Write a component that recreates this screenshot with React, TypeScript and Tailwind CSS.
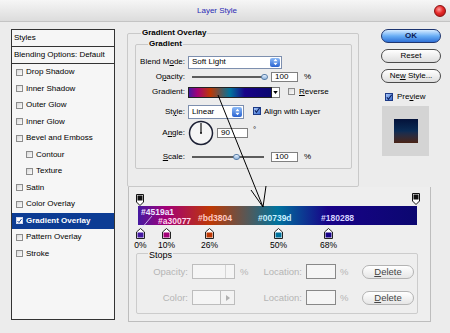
import React from "react";

function Cb() {
  return (
    <span className="inline-block h-[7px] w-[7px] shrink-0 border border-[#8c8c8c] bg-gradient-to-br from-[#d9d9d9] to-[#fbfbfb]" />
  );
}

function CbChecked() {
  return (
    <span className="relative inline-flex h-[8px] w-[8px] shrink-0 items-center justify-center border border-[#1d3a86] bg-gradient-to-br from-[#a9c6f5] to-[#3a6cd0]">
      <svg viewBox="0 0 10 10" className="h-[9px] w-[9px]">
        <path d="M1.5 4.5 L4 8 L9.5 0.5" fill="none" stroke="#0b1f5c" strokeWidth="1.8" />
      </svg>
    </span>
  );
}

function CbSel() {
  return (
    <span className="inline-flex h-[7px] w-[7px] shrink-0 items-center justify-center border border-[#d0d8f0] bg-white">
      <svg viewBox="0 0 10 10" className="h-[6px] w-[6px]">
        <path d="M1 5 L4 8 L9 1" fill="none" stroke="#0c3c94" strokeWidth="2" />
      </svg>
    </span>
  );
}

function SelArrow() {
  return (
    <span className="flex h-full w-[10px] items-center justify-center rounded-[2px] bg-gradient-to-b from-[#8cbaf7] to-[#2a62d0]">
      <svg viewBox="0 0 6 9" className="h-[8px] w-[5px]">
        <path d="M3 0.5 L5.5 3.5 H0.5Z M3 8.5 L5.5 5.5 H0.5Z" fill="white" />
      </svg>
    </span>
  );
}

function Thumb({ left }: { left: string }) {
  return (
    <span className={`absolute top-[1px] ${left} h-[6px] w-[7px] rounded-full border border-[#5a7fa8] bg-gradient-to-b from-[#e6f1ff] to-[#8fb3da]`} />
  );
}

function OpStop() {
  return (
    <svg viewBox="0 0 8 12" className="h-[12px] w-[8px]">
      <path d="M0.5 0.5 H7.5 V8 L4 11.5 L0.5 8 Z" fill="white" stroke="#111" />
      <rect x="1.5" y="1.5" width="5" height="5" fill="#111" />
    </svg>
  );
}

function ColorStop({ color }: { color: string }) {
  return (
    <svg viewBox="0 0 9 11" className="h-[11px] w-[9px]">
      <path d="M4.5 0.5 L8.5 4 V10.5 H0.5 V4 Z" fill="white" stroke="#222" />
      <rect x="1.5" y="4.5" width="6" height="5" fill={color} />
    </svg>
  );
}

const items: { t: React.ReactNode; i?: boolean; sel?: boolean }[] = [
  { t: "Drop Shadow" },
  { t: "Inner Shadow" },
  { t: "Outer Glow" },
  { t: "Inner Glow" },
  { t: "Bevel and Emboss" },
  { t: "Contour", i: true },
  { t: "Texture", i: true },
  { t: "Satin" },
  { t: "Color Overlay" },
  { t: "Gradient Overlay", sel: true },
  { t: "Pattern Overlay" },
  { t: "Stroke" },
];

const GRAD =
  "bg-[linear-gradient(to_right,#4519a1_0%,#a30077_10%,#bd3804_26%,#00739d_50%,#180288_68%,#0b0770_100%)]";

export default function App() {
  return (
    <div className="relative h-[333px] w-[450px] overflow-hidden bg-[#ececec] font-['Liberation_Sans',Arial,sans-serif] text-[8px] leading-none text-black">
      {/* title bar */}
      <div className="flex h-[22px] items-center border-b border-[#c4c4c4] bg-gradient-to-b from-[#f6f6f6] to-[#dcdcdc]">
        <div className="flex flex-1 justify-center text-[#2a2ab4]">Layer Style</div>
        <span className="mr-[4px] h-[12px] w-[12px] rounded-full border border-[#8a1010] bg-[radial-gradient(circle_at_40%_35%,#ff9c9c_0%,#e62a2a_45%,#a80c0c_100%)]" />
      </div>

      <div className="flex h-[311px]">
        {/* left list */}
        <div className="w-[127px] shrink-0 pl-[11px] pt-[7px]">
          <div className="h-[291px] w-[104px] border border-[#333] bg-[#f6f6f6]">
            <div className="flex h-[17px] items-center border-b border-[#333] pl-[2px]">Styles</div>
            <div className="flex h-[17px] items-center border-b border-[#333] pl-[2px]">Blending Options: Default</div>
            {items.map((it, k) => (
              <div
                key={k}
                className={`flex h-[16.5px] items-center ${it.i ? "pl-[14px]" : "pl-[4px]"} ${
                  it.sel ? "bg-[#0c3c94] font-bold text-white" : ""
                }`}
              >
                {it.sel ? <CbSel /> : <Cb />}
                <span className="ml-[3px]">{it.t}</span>
              </div>
            ))}
          </div>
        </div>

        {/* right area */}
        <div className="flex flex-1 flex-col">
          <div className="flex h-[165px]">
            {/* outer group */}
            <div className="relative mt-[11px] h-[154px] w-[232px] rounded-[2px] border border-[#c9c9c9]">
              <span className="absolute -top-[5px] left-[13px] bg-[#ececec] px-[1px] font-bold">Gradient Overlay</span>
              <div className="relative ml-[7px] mt-[10px] h-[125px] w-[217px] rounded-[2px] border border-[#c9c9c9] pt-[10px]">
                <span className="absolute -top-[5px] left-[12px] bg-[#ececec] px-[1px] font-bold">Gradient</span>

                {/* blend mode */}
                <div className="flex h-[14px] items-center">
                  <span className="w-[49px] text-right">
                    Blend M<u>o</u>de:
                  </span>
                  <div className="ml-[3px] flex h-[13px] w-[94px] items-center border border-[#7d8fae] bg-white py-[1px] pl-[3px] pr-[1px]">
                    <span className="flex-1">Soft Light</span>
                    <SelArrow />
                  </div>
                </div>

                {/* opacity */}
                <div className="mt-[1px] flex h-[14px] items-center">
                  <span className="w-[49px] text-right">
                    O<u>p</u>acity:
                  </span>
                  <div className="relative ml-[7px] h-[8px] w-[75px]">
                    <div className="mt-[3px] h-[2px] w-full bg-[#5c5c5c]" />
                    <Thumb left="left-[69px]" />
                  </div>
                  <div className="ml-[4px] flex h-[10px] w-[27px] items-center border border-[#808080] bg-white pl-[3px]">100</div>
                  <span className="ml-[6px]">%</span>
                </div>

                {/* gradient */}
                <div className="mt-[1px] flex h-[14px] items-center">
                  <span className="w-[49px] text-right">Gradient:</span>
                  <div className={`ml-[3px] h-[11px] w-[84px] border border-[#222] ${GRAD}`} />
                  <div className="flex h-[11px] w-[8px] items-center justify-center border border-l-0 border-[#777] bg-white">
                    <svg viewBox="0 0 6 4" className="h-[3px] w-[5px]">
                      <path d="M0 0 H6 L3 4Z" fill="#000" />
                    </svg>
                  </div>
                  <span className="ml-[8px]">
                    <Cb />
                  </span>
                  <span className="ml-[4px]">
                    <u>R</u>everse
                  </span>
                </div>

                {/* style */}
                <div className="mt-[6px] flex h-[14px] items-center">
                  <span className="w-[49px] text-right">
                    St<u>y</u>le:
                  </span>
                  <div className="ml-[3px] flex h-[14px] w-[56px] items-center border border-[#7d8fae] bg-white py-[1px] pl-[3px] pr-[1px]">
                    <span className="flex-1">Linear</span>
                    <SelArrow />
                  </div>
                  <span className="ml-[9px]">
                    <CbChecked />
                  </span>
                  <span className="ml-[3px]">Align with Layer</span>
                </div>

                {/* angle */}
                <div className="mt-[1px] flex h-[26px] items-center">
                  <span className="w-[49px] text-right">
                    A<u>n</u>gle:
                  </span>
                  <svg viewBox="0 0 26 26" className="ml-[3px] h-[26px] w-[26px]">
                    <circle cx="13" cy="13" r="11.5" fill="#f5f5f5" stroke="#1b1f33" strokeWidth="1.5" />
                    <line x1="13" y1="13" x2="13" y2="3" stroke="#111" strokeWidth="1.2" />
                    <circle cx="13" cy="13" r="1" fill="#111" />
                  </svg>
                  <div className="ml-[3px] flex h-[10px] w-[31px] items-center border border-[#808080] bg-white pl-[3px]">90</div>
                  <span className="ml-[5px] -mt-[6px]">°</span>
                </div>

                {/* scale */}
                <div className="mt-[4px] flex h-[14px] items-center">
                  <span className="w-[49px] text-right">
                    <u>S</u>cale:
                  </span>
                  <div className="relative ml-[7px] h-[8px] w-[72px]">
                    <div className="mt-[3px] h-[2px] w-full bg-[#5c5c5c]" />
                    <Thumb left="left-[41px]" />
                  </div>
                  <div className="ml-[7px] flex h-[10px] w-[27px] items-center border border-[#808080] bg-white pl-[3px]">100</div>
                  <span className="ml-[6px]">%</span>
                </div>
              </div>
            </div>

            {/* buttons */}
            <div className="ml-[22px] flex w-[60px] flex-col pt-[7px]">
              <div className="flex h-[14px] items-center justify-center rounded-full border border-[#1d3570] bg-gradient-to-b from-[#d6ebff] via-[#69aef5] to-[#2f70d6] font-bold text-[#0b1a55]">
                OK
              </div>
              <div className="mt-[6px] flex h-[14px] items-center justify-center rounded-full border border-[#4a4a4a] bg-gradient-to-b from-white to-[#dedede]">
                Reset
              </div>
              <div className="mt-[6px] flex h-[14px] items-center justify-center rounded-full border border-[#4a4a4a] bg-gradient-to-b from-white to-[#dedede]">
                Ne<u>w</u>&nbsp;Style...
              </div>
              <div className="ml-[4px] mt-[10px] flex items-center">
                <CbChecked />
                <span className="ml-[4px]">
                  Pre<u>v</u>iew
                </span>
              </div>
              <div className="ml-[1px] mt-[5px] flex h-[50px] w-[47px] items-center justify-center bg-[#d4d4d4]">
                <div className="h-[24px] w-[24px] bg-gradient-to-b from-[#04123a] via-[#0b2c55] to-[#4a2214]" />
              </div>
            </div>
          </div>

          {/* gradient editor panel */}
          <div className="ml-[1px] h-[135px] w-[303px] border-x border-b border-[#bdbdbd] bg-[#eeeeee] pt-[6px]">
            <div className="ml-[9px] w-[279px]">
              <div className="relative h-[13px]">
                <span className="absolute left-[-2px] top-[1px]">
                  <OpStop />
                </span>
                <span className="absolute left-[274px] top-[0px]">
                  <OpStop />
                </span>
              </div>
              <div className={`relative h-[19px] w-full ${GRAD} text-[8.5px] font-bold`}>
                <span className="absolute left-[3px] top-[2px] text-[#ece6ff]">#4519a1</span>
                <span className="absolute left-[20px] top-[11px] text-[#ffd6ec]">#a30077</span>
                <span className="absolute left-[60px] top-[8px] text-[#ffc9c0]">#bd3804</span>
                <span className="absolute left-[120px] top-[8px] text-[#c6f0ff]">#00739d</span>
                <span className="absolute left-[183px] top-[8px] text-[#d6d2ff]">#180288</span>
              </div>
              <div className="relative z-10 h-[28px] text-[8.5px]">
                <div className="absolute left-[-3px] top-[3px] flex w-[11px] flex-col items-center">
                  <ColorStop color="#4519a1" />
                  <span className="mt-[2px]">0%</span>
                </div>
                <div className="absolute left-[23px] top-[3px] flex w-[11px] flex-col items-center">
                  <ColorStop color="#a30077" />
                  <span className="mt-[2px]">10%</span>
                </div>
                <div className="absolute left-[66px] top-[3px] flex w-[11px] flex-col items-center">
                  <ColorStop color="#bd3804" />
                  <span className="mt-[2px]">26%</span>
                </div>
                <div className="absolute left-[135px] top-[3px] flex w-[11px] flex-col items-center">
                  <ColorStop color="#00739d" />
                  <span className="mt-[2px]">50%</span>
                </div>
                <div className="absolute left-[185px] top-[3px] flex w-[11px] flex-col items-center">
                  <ColorStop color="#180288" />
                  <span className="mt-[2px]">68%</span>
                </div>
              </div>
            </div>

            {/* stops group */}
            <div className="relative ml-[7px] h-[61px] w-[282px] rounded-[2px] border border-[#cccccc] text-[9.5px] text-[#b5b5b5]">
              <span className="absolute -top-[3px] left-[11px] z-20 bg-[#eeeeee] px-[1px] text-[9px] text-black">Stops</span>
              <div className="mt-[10px] flex h-[15px] items-center">
                <span className="w-[51px] text-right">Opacity:</span>
                <div className="ml-[4px] flex h-[15px] w-[43px] border border-[#bdbdbd] bg-[#f5f5f5]">
                  <span className="flex-1" />
                  <span className="w-[9px] border-l border-[#d5d5d5]" />
                </div>
                <span className="w-[22px] pl-[5px]">%</span>
                <span className="w-[45px] text-right">Location:</span>
                <div className="ml-[4px] h-[15px] w-[30px] border border-[#888] bg-[#f5f5f5]" />
                <span className="w-[22px] pl-[4px]">%</span>
                <div className="ml-[4px] flex h-[14px] w-[52px] items-center justify-center rounded-full border border-[#b3b3b3] bg-gradient-to-b from-white to-[#e6e6e6] text-[#444]">
                  <u>D</u>elete
                </div>
              </div>
              <div className="mt-[11px] flex h-[15px] items-center">
                <span className="w-[51px] text-right">Color:</span>
                <div className="ml-[4px] h-[15px] w-[29px] border border-[#bdbdbd] bg-[#f5f5f5]" />
                <div className="flex h-[15px] w-[14px] items-center justify-center border border-l-0 border-[#bdbdbd] bg-[#f3f3f3]">
                  <svg viewBox="0 0 4 6" className="h-[6px] w-[4px]">
                    <path d="M0 0 L4 3 L0 6Z" fill="#b0b0b0" />
                  </svg>
                </div>
                <span className="w-[22px]" />
                <span className="w-[45px] text-right">Location:</span>
                <div className="ml-[4px] h-[15px] w-[30px] border border-[#888] bg-[#f5f5f5]" />
                <span className="w-[22px] pl-[4px]">%</span>
                <div className="ml-[4px] flex h-[14px] w-[52px] items-center justify-center rounded-full border border-[#b3b3b3] bg-gradient-to-b from-white to-[#e6e6e6] text-[#444]">
                  <u>D</u>elete
                </div>
              </div>
            </div>
          </div>
        </div>
      </div>

      {/* annotation arrow overlay */}
      <svg className="pointer-events-none absolute left-0 top-0 h-[333px] w-[450px]" viewBox="0 0 450 333">
        <line x1="218" y1="95" x2="263" y2="207" stroke="#000" strokeWidth="1" />
        <line x1="263" y1="207" x2="266" y2="186" stroke="#000" strokeWidth="1" />
        <line x1="263" y1="207" x2="251" y2="190" stroke="#000" strokeWidth="1" />
        <line x1="152" y1="216" x2="141" y2="229" stroke="#d8d4ff" strokeWidth="0.8" />
      </svg>
    </div>
  );
}
